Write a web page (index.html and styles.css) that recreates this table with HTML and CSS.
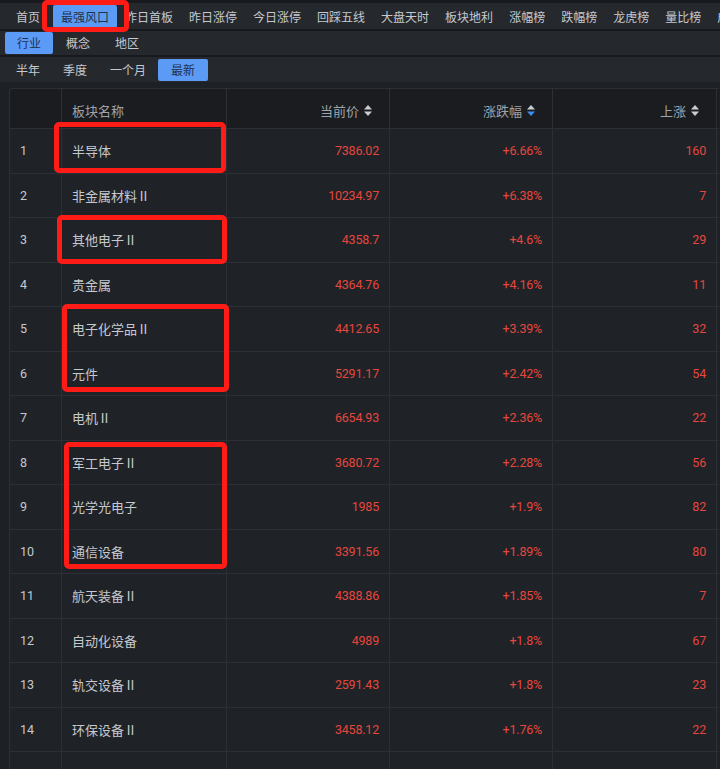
FILE: index.html
```html
<!DOCTYPE html>
<html lang="zh">
<head>
<meta charset="utf-8">
<title>最强风口</title>
<link rel="stylesheet" href="styles.css">
</head>
<body>
<div class="page">
  <nav class="bar bar-main">
    <span class="nav-item first">首页</span>
    <span class="nav-item active">最强风口</span>
    <span class="nav-item">昨日首板</span>
    <span class="nav-item">昨日涨停</span>
    <span class="nav-item">今日涨停</span>
    <span class="nav-item">回踩五线</span>
    <span class="nav-item">大盘天时</span>
    <span class="nav-item">板块地利</span>
    <span class="nav-item">涨幅榜</span>
    <span class="nav-item">跌幅榜</span>
    <span class="nav-item">龙虎榜</span>
    <span class="nav-item">量比榜</span>
    <span class="nav-item">成交榜</span>
  </nav>
  <nav class="bar bar-sub">
    <span class="tab active">行业</span>
    <span class="tab">概念</span>
    <span class="tab">地区</span>
  </nav>
  <nav class="bar bar-period">
    <span class="tab">半年</span>
    <span class="tab">季度</span>
    <span class="tab">一个月</span>
    <span class="tab active">最新</span>
  </nav>

  <div class="table">
    <div class="row head">
      <div class="cell idx"></div>
      <div class="cell name">板块名称</div>
      <div class="cell num">当前价<svg class="sort" viewBox="0 0 8 11"><path d="M0 4.5L4 0L8 4.5Z"/><path d="M0 6.5L8 6.5L4 11Z"/></svg></div>
      <div class="cell num">涨跌幅<svg class="sort" viewBox="0 0 8 11"><path d="M0 4.5L4 0L8 4.5Z"/><path class="on" d="M0 6.5L8 6.5L4 11Z"/></svg></div>
      <div class="cell num">上涨<svg class="sort" viewBox="0 0 8 11"><path d="M0 4.5L4 0L8 4.5Z"/><path d="M0 6.5L8 6.5L4 11Z"/></svg></div>
    </div>
    <div class="row"><div class="cell idx">1</div><div class="cell name">半导体</div><div class="cell num red">7386.02</div><div class="cell num red">+6.66%</div><div class="cell num red">160</div></div>
    <div class="row"><div class="cell idx">2</div><div class="cell name">非金属材料Ⅱ</div><div class="cell num red">10234.97</div><div class="cell num red">+6.38%</div><div class="cell num red">7</div></div>
    <div class="row"><div class="cell idx">3</div><div class="cell name">其他电子Ⅱ</div><div class="cell num red">4358.7</div><div class="cell num red">+4.6%</div><div class="cell num red">29</div></div>
    <div class="row"><div class="cell idx">4</div><div class="cell name">贵金属</div><div class="cell num red">4364.76</div><div class="cell num red">+4.16%</div><div class="cell num red">11</div></div>
    <div class="row"><div class="cell idx">5</div><div class="cell name">电子化学品Ⅱ</div><div class="cell num red">4412.65</div><div class="cell num red">+3.39%</div><div class="cell num red">32</div></div>
    <div class="row"><div class="cell idx">6</div><div class="cell name">元件</div><div class="cell num red">5291.17</div><div class="cell num red">+2.42%</div><div class="cell num red">54</div></div>
    <div class="row"><div class="cell idx">7</div><div class="cell name">电机Ⅱ</div><div class="cell num red">6654.93</div><div class="cell num red">+2.36%</div><div class="cell num red">22</div></div>
    <div class="row"><div class="cell idx">8</div><div class="cell name">军工电子Ⅱ</div><div class="cell num red">3680.72</div><div class="cell num red">+2.28%</div><div class="cell num red">56</div></div>
    <div class="row"><div class="cell idx">9</div><div class="cell name">光学光电子</div><div class="cell num red">1985</div><div class="cell num red">+1.9%</div><div class="cell num red">82</div></div>
    <div class="row"><div class="cell idx">10</div><div class="cell name">通信设备</div><div class="cell num red">3391.56</div><div class="cell num red">+1.89%</div><div class="cell num red">80</div></div>
    <div class="row"><div class="cell idx">11</div><div class="cell name">航天装备Ⅱ</div><div class="cell num red">4388.86</div><div class="cell num red">+1.85%</div><div class="cell num red">7</div></div>
    <div class="row"><div class="cell idx">12</div><div class="cell name">自动化设备</div><div class="cell num red">4989</div><div class="cell num red">+1.8%</div><div class="cell num red">67</div></div>
    <div class="row"><div class="cell idx">13</div><div class="cell name">轨交设备Ⅱ</div><div class="cell num red">2591.43</div><div class="cell num red">+1.8%</div><div class="cell num red">23</div></div>
    <div class="row"><div class="cell idx">14</div><div class="cell name">环保设备Ⅱ</div><div class="cell num red">3458.12</div><div class="cell num red">+1.76%</div><div class="cell num red">22</div></div>
    <div class="row"><div class="cell idx"></div><div class="cell name"></div><div class="cell num"></div><div class="cell num"></div><div class="cell num"></div></div>
  </div>

  <div class="mark mark-nav"></div>
  <div class="mark mark-1"></div>
  <div class="mark mark-2"></div>
  <div class="mark mark-3"></div>
  <div class="mark mark-4"></div>
</div>
</body>
</html>
```

FILE: styles.css
```css
html, body {
  margin: 0;
  padding: 0;
  background: #1d2024;
  overflow: hidden;
}
body {
  width: 720px;
  height: 769px;
  font-family: "Noto Sans CJK SC", "Noto Sans", sans-serif;
  color: #c5c9cf;
}
.page {
  position: relative;
  width: 720px;
  height: 769px;
  overflow: hidden;
}

/* ---------- bars ---------- */
.bar {
  display: flex;
  align-items: center;
  background: #25282d;
  white-space: nowrap;
  box-sizing: border-box;
  overflow: hidden;
}
.bar-main {
  height: 31px;
  border-top: 3px solid #18191c;
  border-bottom: 2px solid #17191c;
  padding-left: 8px;
  font-size: 12px;
}
.nav-item {
  padding: 0 8px;
  height: 23px;
  line-height: 23px;
  color: #c5c9cf;
  flex: none;
}
.nav-item.first { margin-right: 5px; }
.nav-item.active,
.tab.active {
  background: #5b9bf6;
  color: #23314a;
  border-radius: 2px;
}
.bar-sub {
  height: 26px;
  border-bottom: 2px solid #17191c;
  padding-left: 5px;
  gap: 1px;
  font-size: 12px;
}
.bar-period {
  height: 25px;
  padding-left: 5px;
  gap: 1px;
  font-size: 12px;
}
.tab {
  padding: 0 12px;
  height: 22px;
  line-height: 22px;
  color: #c5c9cf;
}
.bar-period .tab { padding: 0 11px; }
.bar-period .tab.active { padding: 0 13px; }

/* ---------- table ---------- */
.table {
  margin: 6px 0 0 9px;
  width: 709px;
  border: 1px solid #2c3036;
  border-right: 0;
  border-radius: 4px 0 0 0;
  background: #1f2227;
  font-size: 13px;
}
.row {
  display: grid;
  grid-template-columns: 52px 165px 163px 163px 164px;
  height: 44.5px;
  box-sizing: border-box;
  border-bottom: 1px solid #2c3036;
}
.row.head {
  height: 40px;
  background: #1a1c20;
  color: #9ea4ab;
  border-radius: 4px 0 0 0;
}
.cell {
  display: flex;
  align-items: center;
  border-right: 1px solid #2c3036;
  box-sizing: border-box;
  padding: 0 10px;
  white-space: nowrap;
}
.row.head .cell { padding-top: 4px; }
.cell.idx {
  font-family: "Roboto", "Liberation Sans", sans-serif;
  font-size: 12.5px;
  color: #c5c9cf;
}
.cell.name { color: #c5c9cf; }
.row.head .cell.name { color: #9ea4ab; }
.cell.num {
  justify-content: flex-end;
  font-family: "Roboto", "Liberation Sans", "Noto Sans CJK SC", sans-serif;
  font-size: 12.5px;
  letter-spacing: -0.2px;
}
.row.head .cell.num {
  font-family: "Noto Sans CJK SC", sans-serif;
  font-size: 13px;
  letter-spacing: 0;
  padding-right: 17px;
}
.red { color: #e5473d; }
.sort {
  width: 8px;
  height: 11px;
  margin-left: 5px;
  fill: #c9cdd3;
}
.sort .on { fill: #3d8fee; }

/* ---------- annotations ---------- */
.mark {
  position: absolute;
  border: 5px solid #ff1c17;
  border-radius: 5px;
  box-sizing: border-box;
}
.mark-nav { left: 42px; top: 0; width: 87px; height: 32px; }
.mark-1 { left: 54px; top: 122px; width: 172px; height: 51px; }
.mark-2 { left: 57px; top: 215px; width: 170px; height: 49px; }
.mark-3 { left: 62px; top: 304px; width: 167px; height: 88px; }
.mark-4 { left: 64px; top: 442px; width: 163px; height: 127px; }
```
